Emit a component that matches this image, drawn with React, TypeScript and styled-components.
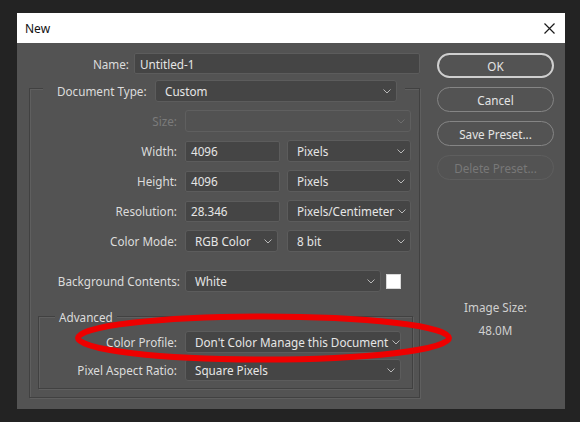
import React from 'react';
import styled, { createGlobalStyle } from 'styled-components';

const GlobalStyle = createGlobalStyle`
  html, body {
    margin: 0;
    background: #232323;
    font-family: "Noto Sans", "DejaVu Sans", sans-serif;
    font-size: 11.7px;
  }
`;

const Page = styled.div`
  padding: 13px 0 13px 17px;
`;

const Dialog = styled.div`
  position: relative;
  width: 548px;
  background: #535353;
  display: flex;
  flex-direction: column;
`;

const TitleBar = styled.div`
  height: 30px;
  background: #fff;
  display: flex;
  align-items: center;
  justify-content: space-between;
  padding: 0 10px 0 8px;
  color: #111;
  font-size: 12px;
`;

const Body = styled.div`
  display: flex;
  gap: 17px;
  padding: 10px 11px 11px 12px;
`;

const LeftCol = styled.div`
  width: 391px;
  display: flex;
  flex-direction: column;
`;

const RightCol = styled.div`
  width: 117px;
  display: flex;
  flex-direction: column;
  gap: 9px;
`;

const Row = styled.div<{ $extra?: number }>`
  display: flex;
  align-items: center;
  height: 22px;
  margin-top: ${p => p.$extra || 0}px;
`;

const Label = styled.div<{ $w: number; $gap?: number; $dim?: boolean; $left?: boolean }>`
  width: ${p => p.$w}px;
  flex: none;
  margin-right: ${p => (p.$gap ?? 8)}px;
  text-align: ${p => (p.$left ? 'left' : 'right')};
  white-space: nowrap;
  color: ${p => (p.$dim ? '#7b7b7b' : '#dcdcdc')};
`;

const TextField = styled.div<{ $w: number }>`
  width: ${p => p.$w}px;
  height: 21px;
  box-sizing: border-box;
  padding: 0 5px;
  display: flex;
  align-items: center;
  background: #454545;
  border: 1px solid #5c5c5c;
  border-radius: 2px;
  color: #e6e6e6;
`;

const SelectBox = styled.div<{ $w: number; $dim?: boolean }>`
  width: ${p => p.$w}px;
  height: 22px;
  box-sizing: border-box;
  padding: 0 5px 0 9px;
  display: flex;
  align-items: center;
  justify-content: space-between;
  gap: 4px;
  background: ${p => (p.$dim ? '#525252' : '#454545')};
  border: 1px solid ${p => (p.$dim ? '#5f5f5f' : '#5c5c5c')};
  border-radius: 3px;
  color: #e6e6e6;
  white-space: nowrap;
`;

const Group = styled.div<{ $mt: number; $mx?: number }>`
  margin: ${p => p.$mt}px ${p => p.$mx ?? 0}px 0 ${p => p.$mx ? p.$mx + 2 : 0}px;
  border: 1px solid #414141;
  box-shadow: 1px 1px 0 #5f5f5f, inset 1px 1px 0 #5f5f5f;
  display: flex;
  flex-direction: column;
`;

const OuterGroup = styled(Group)`
  gap: 8px;
`;

const InnerGroup = styled(Group)`
  gap: 6px;
  padding-bottom: 7px;
  margin-bottom: 8px;
  margin-right: 6px;
`;

const GroupHead = styled.div<{ $mt: number; $ml: number; $pad: string }>`
  align-self: flex-start;
  display: flex;
  align-items: center;
  margin-top: ${p => p.$mt}px;
  margin-left: ${p => p.$ml}px;
  padding: ${p => p.$pad};
  background: #535353;
  color: #dcdcdc;
  line-height: 16px;
`;

const Swatch = styled.div`
  width: 15px;
  height: 15px;
  margin-left: 5px;
  box-sizing: border-box;
  background: #fff;
  border: 1px solid #d8d8d8;
`;

const Button = styled.div<{ $primary?: boolean; $off?: boolean }>`
  height: 25px;
  box-sizing: border-box;
  border-radius: 13px;
  display: flex;
  align-items: center;
  justify-content: center;
  border: ${p => (p.$primary ? '2px solid #cfcfcf' : `1px solid ${p.$off ? '#5e5e5e' : '#858585'}`)};
  color: ${p => (p.$off ? '#787878' : '#e4e4e4')};
`;

const SizeInfo = styled.div`
  margin-top: 110px;
  display: flex;
  flex-direction: column;
  align-items: center;
  gap: 7px;
  line-height: 16px;
  color: #d0d0d0;
`;

const Overlay = styled.svg`
  position: absolute;
  left: 0;
  top: 0;
  pointer-events: none;
`;

const Chevron = ({ dim }: { dim?: boolean }) => (
  <svg width="8" height="5" viewBox="0 0 8 5" style={{ flex: 'none' }}>
    <polyline points="0.5,0.5 4,4 7.5,0.5" fill="none" stroke={dim ? '#6c6c6c' : '#b8b8b8'} strokeWidth="1" />
  </svg>
);

const Select = ({ w, value, dim }: { w: number; value?: string; dim?: boolean }) => (
  <SelectBox $w={w} $dim={dim}>
    <span>{value}</span>
    <Chevron dim={dim} />
  </SelectBox>
);

const App = () => (
  <>
    <GlobalStyle />
    <Page>
      <Dialog>
        <TitleBar>
          <span>New</span>
          <svg width="11" height="11" viewBox="0 0 11 11">
            <path d="M0.5 0.5 L10.5 10.5 M10.5 0.5 L0.5 10.5" stroke="#1a1a1a" strokeWidth="1.2" />
          </svg>
        </TitleBar>

        <Body>
          <LeftCol>
            <Row style={{ height: 21 }}>
              <Label $w={100} $gap={5}>Name:</Label>
              <TextField $w={286}>Untitled-1</TextField>
            </Row>

            <OuterGroup $mt={14}>
              <GroupHead $mt={-9} $ml={13} $pad="0 8px 0 14px" style={{ height: 22 }}>
                <Label $w={93} $gap={5} $left>Document Type:</Label>
                <Select w={242} value="Custom" />
              </GroupHead>

              <Row>
                <Label $w={147} $dim>Size:</Label>
                <Select w={226} dim />
              </Row>
              <Row>
                <Label $w={147}>Width:</Label>
                <TextField $w={95}>4096</TextField>
                <div style={{ width: 7 }} />
                <Select w={124} value="Pixels" />
              </Row>
              <Row>
                <Label $w={147}>Height:</Label>
                <TextField $w={95}>4096</TextField>
                <div style={{ width: 7 }} />
                <Select w={124} value="Pixels" />
              </Row>
              <Row>
                <Label $w={147}>Resolution:</Label>
                <TextField $w={95}>28.346</TextField>
                <div style={{ width: 7 }} />
                <Select w={124} value="Pixels/Centimeter" />
              </Row>
              <Row>
                <Label $w={147}>Color Mode:</Label>
                <Select w={93} value="RGB Color" />
                <div style={{ width: 9 }} />
                <Select w={124} value="8 bit" />
              </Row>
              <Row $extra={10}>
                <Label $w={150} $gap={5}>Background Contents:</Label>
                <Select w={196} value="White" />
                <Swatch />
              </Row>

              <InnerGroup $mt={16} $mx={6}>
                <GroupHead $mt={-8} $ml={16} $pad="0 4px">Advanced</GroupHead>
                <Row>
                  <Label $w={138}>Color Profile:</Label>
                  <Select w={216} value="Don't Color Manage this Document" />
                </Row>
                <Row>
                  <Label $w={138}>Pixel Aspect Ratio:</Label>
                  <Select w={216} value="Square Pixels" />
                </Row>
              </InnerGroup>
            </OuterGroup>
          </LeftCol>

          <RightCol>
            <Button $primary>OK</Button>
            <Button>Cancel</Button>
            <Button>Save Preset...</Button>
            <Button $off>Delete Preset...</Button>
            <SizeInfo>
              <span>Image Size:</span>
              <span>48.0M</span>
            </SizeInfo>
          </RightCol>
        </Body>

        <Overlay width="548" height="396" viewBox="0 0 548 396">
          <ellipse cx="246.5" cy="325" rx="185.5" ry="21.5" fill="none" stroke="#ee0000" strokeWidth="6" />
        </Overlay>
      </Dialog>
    </Page>
  </>
);

export default App;
